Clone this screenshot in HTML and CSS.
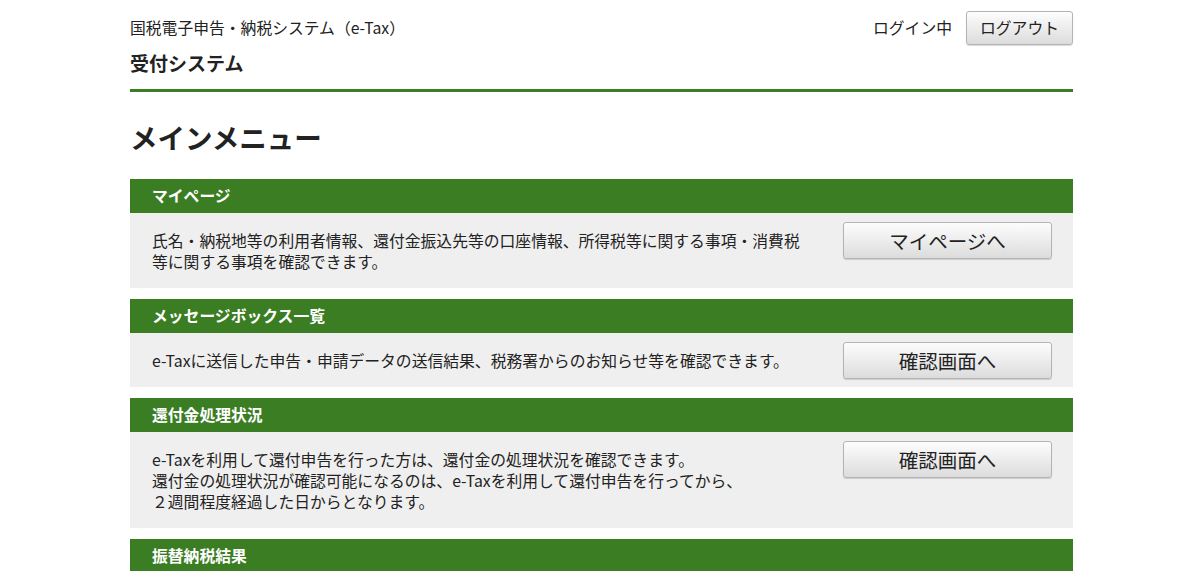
FILE: index.html
```html
<!DOCTYPE html>
<html lang="ja">
<head>
  <meta charset="UTF-8" />
  <title>受付システム メインメニュー</title>
  <link rel="stylesheet" href="styles.css">
</head>
<body>
  <div class="page">
    <header class="site-header">
      <div class="site-top">
        <p class="system-name">国税電子申告・納税システム（e-Tax）</p>
        <div class="login">
          <span class="login-state">ログイン中</span>
          <button class="btn btn-small">ログアウト</button>
        </div>
      </div>
      <p class="site-title">受付システム</p>
    </header>

    <h1 class="page-title">メインメニュー</h1>

    <section class="menu">
      <h2 class="menu-head">マイページ</h2>
      <div class="menu-body">
        <p class="menu-text">氏名・納税地等の利用者情報、還付金振込先等の口座情報、所得税等に関する事項・消費税等に関する事項を確認できます。</p>
        <button class="btn btn-large">マイページへ</button>
      </div>
    </section>

    <section class="menu">
      <h2 class="menu-head">メッセージボックス一覧</h2>
      <div class="menu-body">
        <p class="menu-text">e-Taxに送信した申告・申請データの送信結果、税務署からのお知らせ等を確認できます。</p>
        <button class="btn btn-large">確認画面へ</button>
      </div>
    </section>

    <section class="menu">
      <h2 class="menu-head">還付金処理状況</h2>
      <div class="menu-body">
        <p class="menu-text">e-Taxを利用して還付申告を行った方は、還付金の処理状況を確認できます。<br>還付金の処理状況が確認可能になるのは、e-Taxを利用して還付申告を行ってから、<br>２週間程度経過した日からとなります。</p>
        <button class="btn btn-large">確認画面へ</button>
      </div>
    </section>

    <section class="menu">
      <h2 class="menu-head">振替納税結果</h2>
      <div class="menu-body">
        <p class="menu-text">振替納税の結果を確認できます。</p>
        <button class="btn btn-large">確認画面へ</button>
      </div>
    </section>
  </div>
</body>
</html>
```

FILE: styles.css
```css
body {
  margin: 0;
  padding-left: 3px;
  background: #ffffff;
  color: #222222;
  font-family: "Noto Sans CJK JP", sans-serif;
}

.page {
  width: 943px;
  margin: 0 auto;
}

.site-header {
  padding-top: 11px;
  padding-bottom: 14px;
  border-bottom: 3px solid #3b7d23;
}

.site-top {
  display: flex;
  justify-content: space-between;
  align-items: center;
  height: 33px;
}

.system-name {
  margin: 0;
  font-size: 15.8px;
}

.login {
  display: flex;
  align-items: center;
  gap: 14px;
}

.login-state {
  font-size: 15.8px;
}

.site-title {
  margin: 7px 0 0;
  font-size: 19px;
  font-weight: bold;
  line-height: 24px;
}

.page-title {
  margin: 27px 0 24px;
  font-size: 27.5px;
  line-height: 36px;
  font-weight: bold;
}

.menu {
  margin-bottom: 11px;
}

.menu-head {
  margin: 0;
  padding-left: 22px;
  height: 34px;
  line-height: 34px;
  background: #3b7d23;
  color: #ffffff;
  font-size: 15.8px;
  font-weight: bold;
}

.menu-body {
  display: flex;
  align-items: flex-start;
  padding: 0 21px 0 22px;
  background: #efefef;
}

.menu-text {
  width: 655px;
  margin: 0;
  padding: 17px 0 16px;
  font-size: 15.8px;
  line-height: 21px;
}

.btn {
  font-family: "Noto Sans CJK JP", sans-serif;
  color: #222222;
  border: 1px solid #b4b4b4;
  border-radius: 3px;
  background: linear-gradient(#fdfdfd, #dcdcdc);
  box-shadow: 0 1px 1px rgba(0, 0, 0, 0.15);
  cursor: pointer;
}

.btn-small {
  height: 34px;
  padding: 0 13px;
  font-size: 15.8px;
}

.btn-large {
  margin-top: 9px;
  margin-left: auto;
  width: 209px;
  height: 37px;
  font-size: 19.5px;
  line-height: 1;
}
```
